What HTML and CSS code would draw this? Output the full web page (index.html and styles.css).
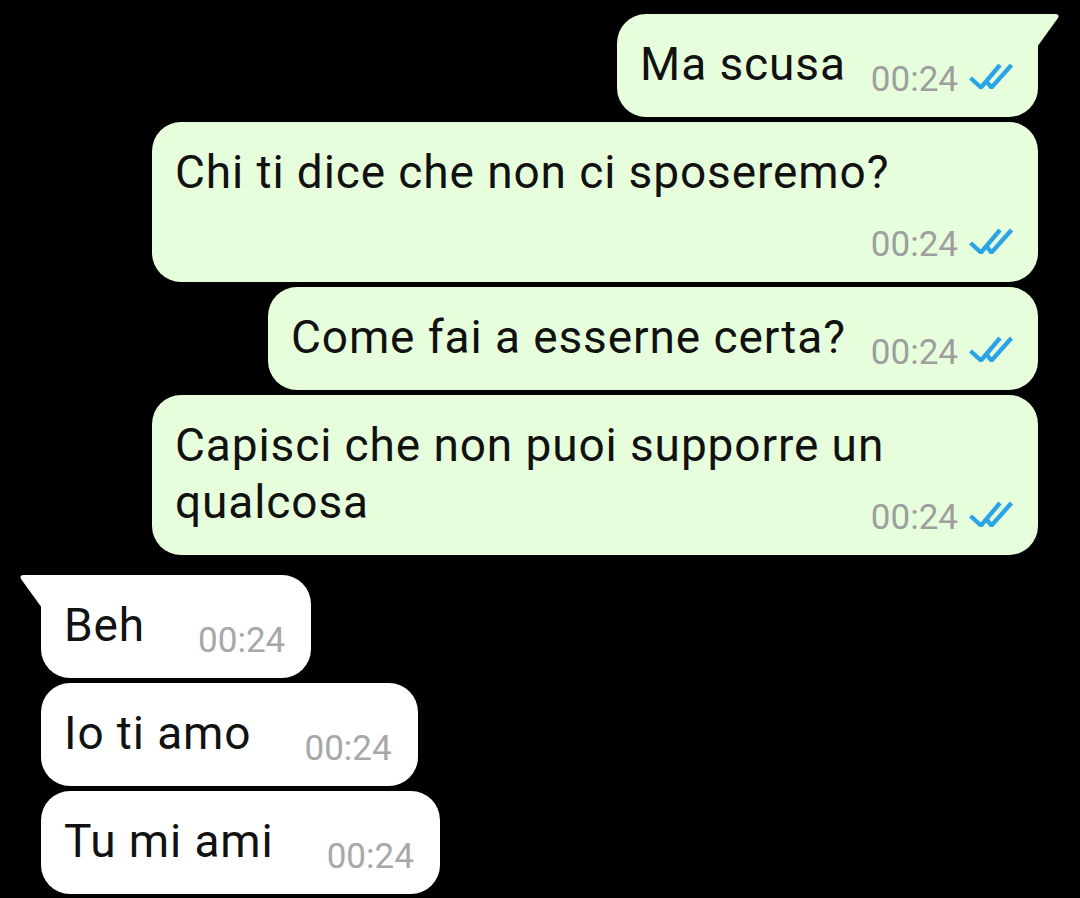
FILE: index.html
```html
<!DOCTYPE html>
<html lang="it">
<head>
<meta charset="utf-8">
<title>Chat</title>
<link rel="stylesheet" href="styles.css">
</head>
<body>
<div class="chat">
  <div class="bubble out tail">
    <span class="text">Ma scusa</span><span class="meta"><span class="time">00:24</span><svg class="ticks" viewBox="0 0 46 26" width="46" height="26"><path d="M1.5 15 L12 24.5 L31 2"/><path d="M17.5 18.5 L22.5 24.5 L42.5 2"/></svg></span>
  </div>
  <div class="bubble out">
    <span class="text">Chi ti dice che non ci sposeremo?</span><span class="meta"><span class="time">00:24</span><svg class="ticks" viewBox="0 0 46 26" width="46" height="26"><path d="M1.5 15 L12 24.5 L31 2"/><path d="M17.5 18.5 L22.5 24.5 L42.5 2"/></svg></span>
  </div>
  <div class="bubble out">
    <span class="text">Come fai a esserne certa?</span><span class="meta"><span class="time">00:24</span><svg class="ticks" viewBox="0 0 46 26" width="46" height="26"><path d="M1.5 15 L12 24.5 L31 2"/><path d="M17.5 18.5 L22.5 24.5 L42.5 2"/></svg></span>
  </div>
  <div class="bubble out">
    <span class="text">Capisci che non puoi supporre un qualcosa</span><span class="meta"><span class="time">00:24</span><svg class="ticks" viewBox="0 0 46 26" width="46" height="26"><path d="M1.5 15 L12 24.5 L31 2"/><path d="M17.5 18.5 L22.5 24.5 L42.5 2"/></svg></span>
  </div>
  <div class="bubble in tail first-in">
    <span class="text">Beh</span><span class="meta"><span class="time">00:24</span></span>
  </div>
  <div class="bubble in">
    <span class="text">Io ti amo</span><span class="meta"><span class="time">00:24</span></span>
  </div>
  <div class="bubble in">
    <span class="text">Tu mi ami</span><span class="meta"><span class="time">00:24</span></span>
  </div>
</div>
</body>
</html>
```

FILE: styles.css
```css
html, body {
  margin: 0;
  padding: 0;
  background: #000;
}

body {
  width: 1080px;
  height: 898px;
  overflow: hidden;
  font-family: Roboto, "Liberation Sans", sans-serif;
}

.chat {
  display: flex;
  flex-direction: column;
  gap: 5px;
  padding-top: 14px;
}

.bubble {
  position: relative;
  display: flow-root;
  box-sizing: border-box;
  padding: 22px 23px 17px 23px;
  border-radius: 29px;
  font-size: 46px;
  line-height: 57px;
  color: #111;
}

.text {
  letter-spacing: 0.9px;
}

.out {
  align-self: flex-end;
  margin-right: 42px;
  max-width: 886px;
  background: #e6fedb;
}

.in {
  align-self: flex-start;
  margin-left: 41px;
  max-width: 886px;
  background: #fff;
  padding-right: 26px;
}

.first-in {
  margin-top: 15px;
}

.meta {
  float: right;
  margin-top: 23px;
  margin-left: 25px;
  font-size: 35px;
  line-height: 41px;
  white-space: nowrap;
}

.in .meta {
  margin-left: 53px;
}

.out .time {
  color: #9e9e9e;
}

.in .time {
  color: #a6a8aa;
}

.ticks {
  display: inline-block;
  margin-left: 11px;
  vertical-align: 2px;
  fill: none;
  stroke: #2aa4e4;
  stroke-width: 4.3;
  stroke-linejoin: miter;
}

.out.tail {
  border-top-right-radius: 0;
}

.in.tail {
  border-top-left-radius: 0;
}

.tail::before {
  content: "";
  position: absolute;
  top: 0;
  width: 23px;
  height: 33px;
}

.out.tail::before {
  right: -22px;
  background: #e6fedb;
  clip-path: path("M0 0 H18 Q23 0 21 4 L0 33 Z");
}

.in.tail::before {
  left: -22px;
  background: #fff;
  clip-path: path("M23 0 H5 Q0 0 2 4 L23 33 Z");
}
```
